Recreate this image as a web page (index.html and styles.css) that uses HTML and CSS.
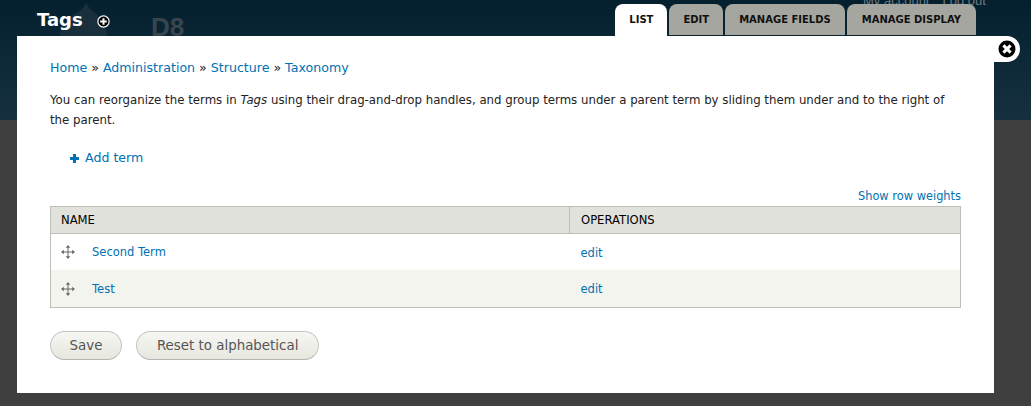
FILE: index.html
```html
<!DOCTYPE html>
<html lang="en">
<head>
    <meta charset="UTF-8">
    <title>Tags</title>
    <link rel="stylesheet" href="styles.css">
</head>
<body>
    <div class="backdrop">
        <svg class="drop" width="60" height="36" viewBox="0 0 60 36"><path d="M26 1c2 7 8 9 13 15 5 6 8 12 8 20H0C0 25 6 19 13 14 19 10 24 8 26 1z"/></svg>
        <div class="site-name">D8</div>
        <div class="user-links"><span>My account</span><span>Log out</span></div>
    </div>

    <header class="title-bar">
        <h1>Tags</h1>
        <svg class="shortcut" width="13" height="13" viewBox="0 0 13 13">
            <circle cx="6.5" cy="6.5" r="5.6" fill="#000" stroke="#fff" stroke-width="1.2"/>
            <path d="M6.5 3.2v6.6M3.2 6.5h6.6" stroke="#fff" stroke-width="2"/>
        </svg>
        <nav class="tabs">
            <a class="tab active">LIST</a>
            <a class="tab">EDIT</a>
            <a class="tab">MANAGE FIELDS</a>
            <a class="tab tab-last">MANAGE DISPLAY</a>
        </nav>
    </header>

    <main class="dialog">
        <div class="close-wrap">
            <svg width="18" height="18" viewBox="0 0 18 18">
                <circle cx="9" cy="9" r="8.5" fill="#000"/>
                <path d="M5.4 5.4l7.2 7.2M12.6 5.4l-7.2 7.2" stroke="#fff" stroke-width="3"/>
            </svg>
        </div>

        <div class="breadcrumb">
            <a>Home</a> » <a>Administration</a> » <a>Structure</a> » <a>Taxonomy</a>
        </div>

        <p class="help">You can reorganize the terms in <em>Tags</em> using their drag-and-drop handles, and group terms under a parent term by sliding them under and to the right of the parent.</p>

        <a class="add-term"><span class="plus"></span>Add term</a>

        <div class="weights"><a>Show row weights</a></div>

        <table class="terms">
            <thead>
                <tr><th class="col-name">NAME</th><th>OPERATIONS</th></tr>
            </thead>
            <tbody>
                <tr>
                    <td class="term">
                        <div class="term-row">
                            <svg class="handle" width="14" height="14" viewBox="0 0 14 14"><path d="M7 2v10M2 7h10" stroke="#666" stroke-width="1"/><path d="M7 0l2.2 2.8H4.800zM7 14l2.2-2.8H4.800zM0 7l2.800-2.200v4.400zM14 7l-2.800-2.200v4.400z" fill="#666"/></svg>
                            <a>Second Term</a>
                        </div>
                    </td>
                    <td class="ops"><a>edit</a></td>
                </tr>
                <tr class="even">
                    <td class="term">
                        <div class="term-row">
                            <svg class="handle" width="14" height="14" viewBox="0 0 14 14"><path d="M7 2v10M2 7h10" stroke="#666" stroke-width="1"/><path d="M7 0l2.2 2.8H4.800zM7 14l2.2-2.8H4.800zM0 7l2.800-2.200v4.400zM14 7l-2.800-2.200v4.400z" fill="#666"/></svg>
                            <a>Test</a>
                        </div>
                    </td>
                    <td class="ops"><a>edit</a></td>
                </tr>
            </tbody>
        </table>

        <div class="actions">
            <button class="btn btn-save">Save</button>
            <button class="btn">Reset to alphabetical</button>
        </div>
    </main>
</body>
</html>
```

FILE: styles.css
```css
* {
    margin: 0;
    padding: 0;
    box-sizing: border-box;
}

body {
    width: 1031px;
    height: 406px;
    overflow: hidden;
    position: relative;
    font-family: "DejaVu Sans", "Liberation Sans", sans-serif;
    font-size: 12px;
    color: #222;
    background-color: #3f3f3f;
}

a {
    color: #0071b3;
    text-decoration: none;
}

.backdrop {
    height: 120px;
    background: linear-gradient(#04202f, #16303f);
    position: relative;
    overflow: hidden;
}

.drop {
    position: absolute;
    left: 60px;
    top: 1px;
    fill: #1a2f3c;
}

.site-name {
    position: absolute;
    left: 151px;
    top: 12px;
    font-family: "Liberation Sans", sans-serif;
    font-size: 26px;
    font-weight: 700;
    color: #38454c;
}

.user-links {
    position: absolute;
    left: 863px;
    top: -7px;
    display: flex;
    gap: 13px;
    font-family: "Liberation Sans", sans-serif;
    font-size: 13px;
    color: #6b7a82;
}

.title-bar {
    position: absolute;
    left: 0;
    top: 0;
    width: 100%;
    height: 36px;
    display: flex;
    align-items: flex-start;
    padding-left: 37px;
}

h1 {
    font-size: 18px;
    line-height: 24px;
    margin-top: 8px;
    font-weight: 700;
    color: #fff;
}

.shortcut {
    margin: 15px 0 0 14px;
}

.tabs {
    display: flex;
    gap: 2px;
    margin-left: auto;
    margin-right: 55px;
    margin-top: 4px;
}

.tab {
    height: 31px;
    padding: 0 14px;
    border-radius: 8px 8px 0 0;
    background-color: #a6a6a0;
    color: #111;
    font-size: 10px;
    font-weight: 700;
    line-height: 31px;
}

.tab-last {
    padding: 0 15px;
}

.tab.active {
    height: 32px;
    background-color: #fff;
}

.dialog {
    position: absolute;
    left: 17px;
    top: 36px;
    width: 977px;
    height: 357px;
    padding: 22px 33px;
    background-color: #fff;
}

.close-wrap {
    position: absolute;
    right: -26px;
    top: 0;
    width: 26px;
    height: 26px;
    padding: 4px 0 0 4px;
    background-color: #fff;
    border-radius: 0 13px 13px 0;
    display: flex;
}

.breadcrumb {
    font-size: 12.6px;
    line-height: 20px;
}

.help {
    margin-top: 12px;
    line-height: 20px;
    font-size: 11.78px;
}

.add-term {
    display: flex;
    align-items: center;
    margin: 18px 0 0 20px;
    font-size: 12.6px;
    line-height: 20px;
}

.plus {
    width: 9px;
    height: 9px;
    margin-right: 6px;
    background:
        linear-gradient(#0071b3, #0071b3) center / 9px 3px no-repeat,
        linear-gradient(#0071b3, #0071b3) center / 3px 9px no-repeat;
}

.weights {
    margin-top: 19px;
    text-align: right;
    font-size: 11.4px;
    line-height: 18px;
}

.terms {
    width: 100%;
    border-collapse: collapse;
    border: 1px solid #bebfb9;
    margin-top: 1px;
}

th {
    height: 27px;
    padding: 0 11px;
    text-align: left;
    font-size: 11.6px;
    font-weight: 400;
    color: #000;
    background-color: #e1e2dc;
    border-bottom: 1px solid #bebfb9;
}

.col-name {
    width: 519px;
    padding-left: 10px;
    border-right: 1px solid #bebfb9;
}

td {
    height: 36px;
    padding: 1px 10px 0;
    font-size: 11.5px;
}

.ops {
    padding: 3px 10px 0 11px;
}

.even td {
    height: 38px;
    padding-top: 1px;
    background-color: #f3f4ee;
}

.term-row {
    display: flex;
    align-items: center;
}

.handle {
    margin-right: 17px;
}

.actions {
    display: flex;
    gap: 14px;
    margin-top: 23px;
}

.btn {
    height: 29px;
    padding: 0 20px;
    border: 1px solid #c6c6c6;
    border-bottom-color: #b4b4b4;
    border-radius: 15px;
    background: linear-gradient(#f6f6f3, #e7e7df);
    color: #555;
    font-family: inherit;
    font-size: 13.4px;
}

.btn-save {
    padding: 0 18.5px;
}
```
